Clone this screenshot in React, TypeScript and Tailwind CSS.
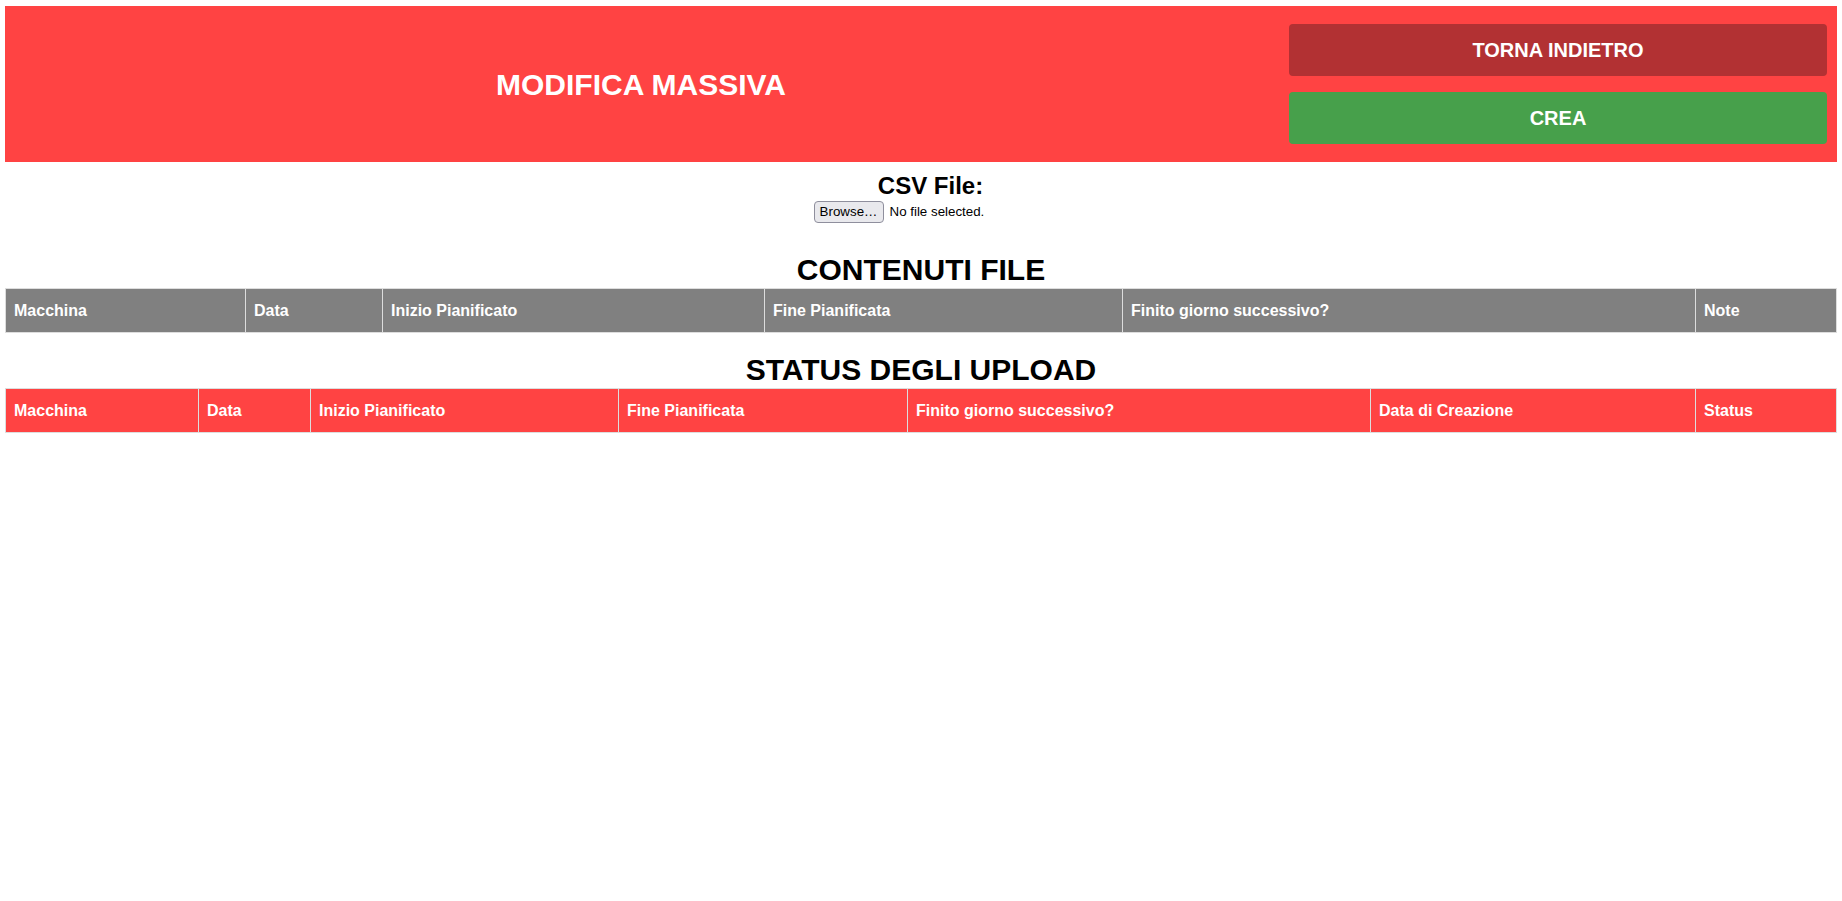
const contenutiCols = [
  { label: "Macchina", w: "w-[240px]" },
  { label: "Data", w: "w-[137px]" },
  { label: "Inizio Pianificato", w: "w-[382px]" },
  { label: "Fine Pianificata", w: "w-[358px]" },
  { label: "Finito giorno successivo?", w: "w-[573px]" },
  { label: "Note", w: "" },
];

const statusCols = [
  { label: "Macchina", w: "w-[193px]" },
  { label: "Data", w: "w-[112px]" },
  { label: "Inizio Pianificato", w: "w-[308px]" },
  { label: "Fine Pianificata", w: "w-[289px]" },
  { label: "Finito giorno successivo?", w: "w-[463px]" },
  { label: "Data di Creazione", w: "w-[325px]" },
  { label: "Status", w: "" },
];

function HeaderTable({ cols, bg }: { cols: { label: string; w: string }[]; bg: string }) {
  return (
    <table className="w-full table-fixed border-collapse">
      <colgroup>
        {cols.map((c) => (
          <col key={c.label} className={c.w} />
        ))}
      </colgroup>
      <thead>
        <tr className={bg}>
          {cols.map((c) => (
            <th
              key={c.label}
              className="border border-[#dddddd] px-[8px] py-[12px] text-left text-[16px] leading-[19px] font-bold text-white"
            >
              {c.label}
            </th>
          ))}
        </tr>
      </thead>
      <tbody></tbody>
    </table>
  );
}

export default function App() {
  return (
    <div
      className="min-h-screen bg-white px-[5px] pt-[6px] text-black"
      style={{ fontFamily: '"Liberation Sans", Arial, sans-serif' }}
    >
      {/* top bar */}
      <header className="flex items-center bg-[#ff4343] py-[18px] pr-[10px]">
        <h1 className="flex-1 pr-[12px] text-center text-[30px] font-bold text-white">MODIFICA MASSIVA</h1>
        <div className="flex w-[538px] flex-col gap-[16px]">
          <button className="h-[52px] rounded-[4px] bg-[#b23133] text-[20px] font-bold text-white">
            TORNA INDIETRO
          </button>
          <button className="h-[52px] rounded-[4px] bg-[#47a04b] text-[20px] font-bold text-white">
            CREA
          </button>
        </div>
      </header>

      {/* csv upload */}
      <div className="mt-[10px] flex flex-col items-center">
        <h2 className="pl-[19px] text-[24px] leading-[27px] font-bold">CSV File:</h2>
        <div className="mt-[2px] flex w-[215px] items-center text-[13.33px]">
          <button className="h-[22px] w-[70px] rounded-[4px] border border-[#8f8f9d] bg-[#e9e9ed] text-[13.33px] text-black">
            Browse…
          </button>
          <span className="ml-[6px]">No file selected.</span>
        </div>
      </div>

      <h2 className="mt-[30px] mb-[1px] text-center text-[30px] leading-[34px] font-bold">CONTENUTI FILE</h2>
      <HeaderTable cols={contenutiCols} bg="bg-[#808080]" />

      <h2 className="mt-[20px] mb-[1px] text-center text-[30px] leading-[34px] font-bold">STATUS DEGLI UPLOAD</h2>
      <HeaderTable cols={statusCols} bg="bg-[#ff4343]" />
    </div>
  );
}
